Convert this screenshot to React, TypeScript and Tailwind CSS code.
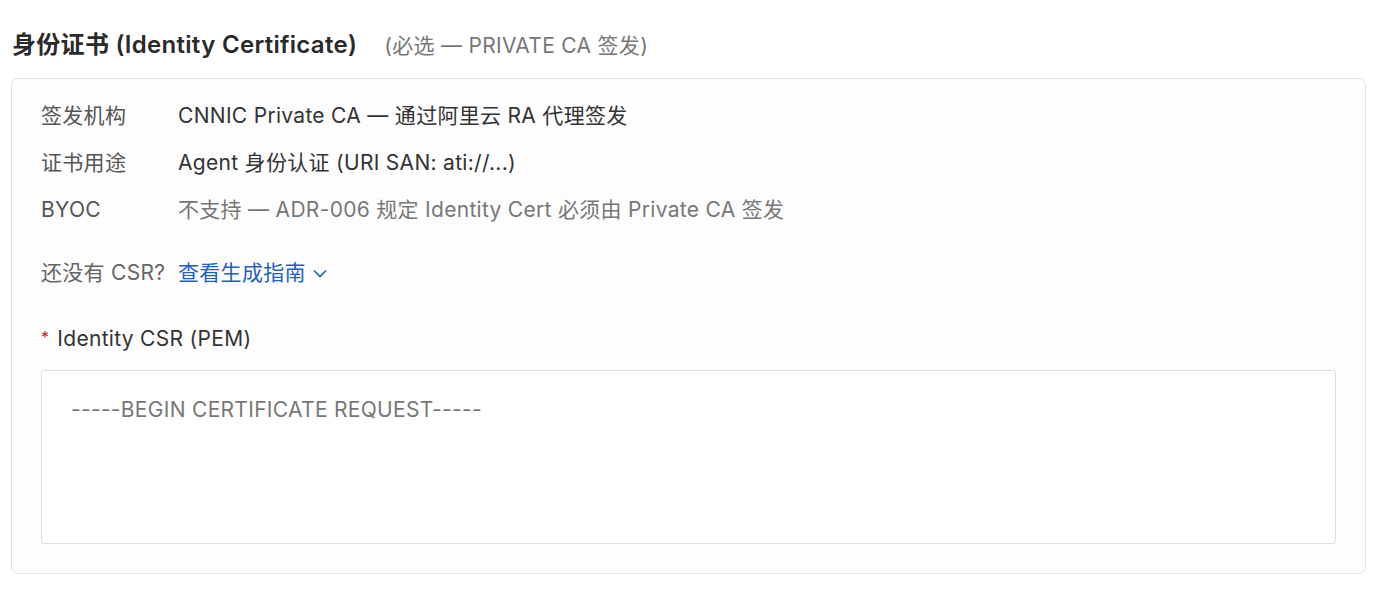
import React from "react";

const font = { fontFamily: 'Inter, "Noto Sans CJK SC", sans-serif' };

function Row({ label, value, muted }: { label: string; value: string; muted?: boolean }) {
  return (
    <div className="flex items-center h-[47px]">
      <div className="w-[137px] shrink-0 text-[#555]">{label}</div>
      <div className={muted ? "text-[#777]" : "text-[#333]"}>{value}</div>
    </div>
  );
}

export default function App() {
  return (
    <div className="w-[1388px] h-[598px] bg-white text-[21px] tracking-[0.3px]" style={font}>
      <div className="pl-[12px] pt-[26px] h-[78px] flex items-baseline">
        <span className="text-[24px] font-semibold text-[#2a2a2a] leading-[38px] tracking-[0.3px]">身份证书 (Identity Certificate)</span>
        <span className="ml-[27px] text-[21px] text-[#777]">(必选 — PRIVATE CA 签发)</span>
      </div>
      <div className="ml-[11px] w-[1355px] h-[496px] border border-[#e2e2e2] rounded-[7px] bg-[#fdfdfd] px-[29px] pt-[13px]">
        <Row label="签发机构" value="CNNIC Private CA — 通过阿里云 RA 代理签发" />
        <Row label="证书用途" value="Agent 身份认证 (URI SAN: ati://...)" />
        <Row label="BYOC" value="不支持 — ADR-006 规定 Identity Cert 必须由 Private CA 签发" muted />
        <div className="mt-[25px] flex items-center h-[30px]">
          <span className="w-[137px] shrink-0 text-[#666]">还没有 CSR?</span>
          <span className="text-[#1d5fc4]">查看生成指南</span>
          <svg className="ml-[7px]" width="14" height="9" viewBox="0 0 14 9" fill="none">
            <path d="M1 1.5 L7 7.5 L13 1.5" stroke="#1d5fc4" strokeWidth="1.6" />
          </svg>
        </div>
        <div className="mt-[36px] flex items-center h-[30px]">
          <span className="text-[#d32020] text-[16px] mr-[8px] -mt-[4px]">*</span>
          <span className="text-[#333]">Identity CSR (PEM)</span>
        </div>
        <div className="mt-[16px] h-[174px] border border-[#dedede] rounded-[3px] bg-white pl-[29px] pt-[23px]">
          <span className="text-[#777]">-----BEGIN CERTIFICATE REQUEST-----</span>
        </div>
      </div>
    </div>
  );
}
